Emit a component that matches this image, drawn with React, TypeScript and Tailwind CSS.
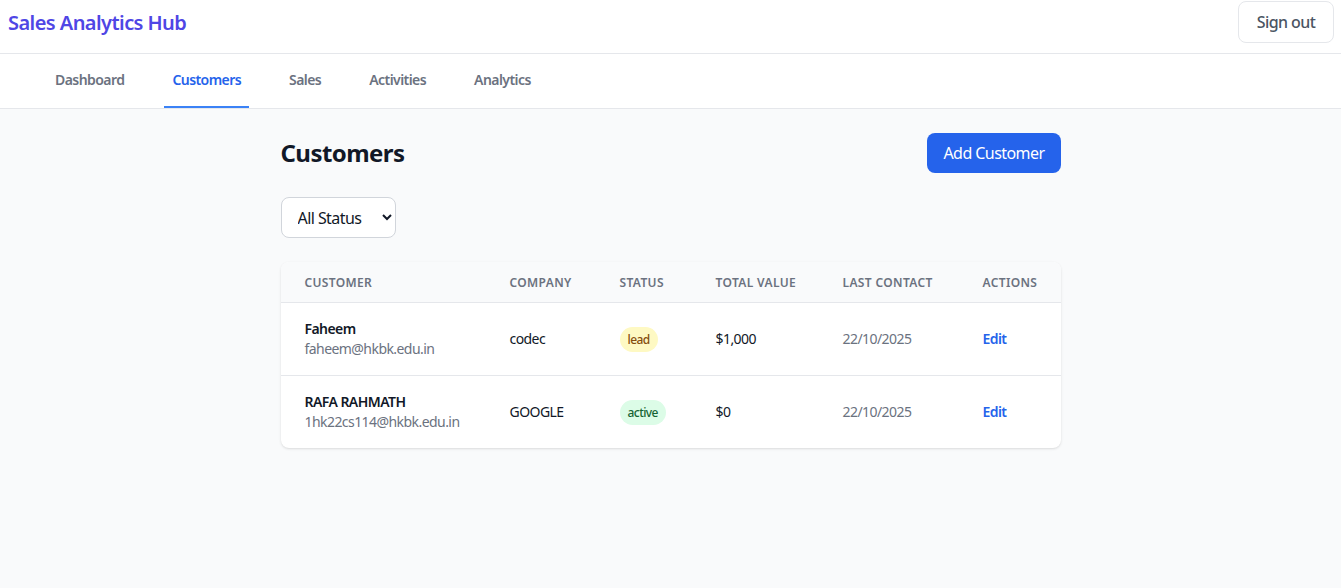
import { useState } from "react";

type Customer = {
  name: string;
  email: string;
  company: string;
  status: "lead" | "active";
  value: string;
  lastContact: string;
};

const CUSTOMERS: Customer[] = [
  { name: "Faheem", email: "faheem@hkbk.edu.in", company: "codec", status: "lead", value: "$1,000", lastContact: "22/10/2025" },
  { name: "RAFA RAHMATH", email: "1hk22cs114@hkbk.edu.in", company: "GOOGLE", status: "active", value: "$0", lastContact: "22/10/2025" },
];

const TABS = ["Dashboard", "Customers", "Sales", "Activities", "Analytics"];

const BADGE: Record<Customer["status"], string> = {
  lead: "bg-[#fef9c3] text-[#854d0e]",
  active: "bg-[#dcfce7] text-[#166534]",
};

export default function App() {
  const [tab, setTab] = useState("Customers");
  const [filter, setFilter] = useState("all");

  const rows = CUSTOMERS.filter((c) => filter === "all" || c.status === filter);

  return (
    <div className="min-h-screen bg-[#f9fafb] font-['Noto_Sans',sans-serif] tracking-[-0.035em] text-[#111827]">
      <header className="flex h-[54px] items-start justify-between border-b border-[#e5e7eb] bg-white pl-2 pr-[7px]">
        <h1 className="mt-[9px] text-xl font-semibold text-[#4f46e5]">Sales Analytics Hub</h1>
        <button className="mt-px h-[42px] w-[96px] rounded-lg border border-[#e5e7eb] font-medium text-[#4b5563]">
          Sign out
        </button>
      </header>

      {/* tabs */}
      <nav className="flex h-[55px] gap-8 border-b border-[#e5e7eb] bg-white pl-[47px]">
        {TABS.map((t) => (
          <button
            key={t}
            onClick={() => setTab(t)}
            className={
              "border-b-2 px-2 text-sm font-semibold " +
              (t === tab ? "border-[#3b82f6] text-[#2563eb]" : "border-transparent text-[#6b7280]")
            }
          >
            {t}
          </button>
        ))}
      </nav>

      <main className="mx-auto w-[780px] py-6">
        <div className="flex h-10 items-center justify-between">
          <h2 className="text-2xl font-bold">Customers</h2>
          <button className="h-10 rounded-lg bg-[#2563eb] px-4 text-white">Add Customer</button>
        </div>

        <select
          value={filter}
          onChange={(e) => setFilter(e.target.value)}
          className="mt-6 h-[41px] w-[115px] rounded-lg border border-[#d1d5db] bg-white px-3 text-base"
        >
          <option value="all">All Status</option>
          <option value="lead">Lead</option>
          <option value="active">Active</option>
        </select>

        <div className="mt-6 overflow-hidden rounded-lg bg-white shadow">
          <table className="w-full table-fixed text-left">
            <colgroup>
              <col className="w-[205px]" />
              <col className="w-[110px]" />
              <col className="w-[96px]" />
              <col className="w-[127px]" />
              <col className="w-[140px]" />
              <col />
            </colgroup>
            <thead className="bg-[#f9fafb]">
              <tr className="h-10 border-b border-[#e5e7eb] text-xs uppercase tracking-[0.03em] text-[#6b7280]">
                <th className="pl-6 pt-[2px] font-semibold">Customer</th>
                <th className="pl-6 pt-[2px] font-semibold">Company</th>
                <th className="pl-6 pt-[2px] font-semibold">Status</th>
                <th className="pl-6 pt-[2px] font-semibold">Total Value</th>
                <th className="pl-6 pt-[2px] font-semibold">Last Contact</th>
                <th className="pl-6 pt-[2px] font-semibold">Actions</th>
              </tr>
            </thead>
            <tbody className="text-sm">
              {rows.map((c, i) => (
                <tr key={c.email} className={"h-[73px] " + (i > 0 ? "border-t border-[#e5e7eb]" : "")}>
                  <td className="pl-6">
                    <div className="font-semibold text-[#111827]">{c.name}</div>
                    <div className="text-[#6b7280]">{c.email}</div>
                  </td>
                  <td className="pl-6">{c.company}</td>
                  <td className="pl-6">
                    <span className={"rounded-full px-2 py-1 text-xs font-medium " + BADGE[c.status]}>{c.status}</span>
                  </td>
                  <td className="pl-6">{c.value}</td>
                  <td className="pl-6 text-[#6b7280]">{c.lastContact}</td>
                  <td className="pl-6">
                    <button className="font-semibold text-[#2563eb]">Edit</button>
                  </td>
                </tr>
              ))}
            </tbody>
          </table>
        </div>
      </main>
    </div>
  );
}
